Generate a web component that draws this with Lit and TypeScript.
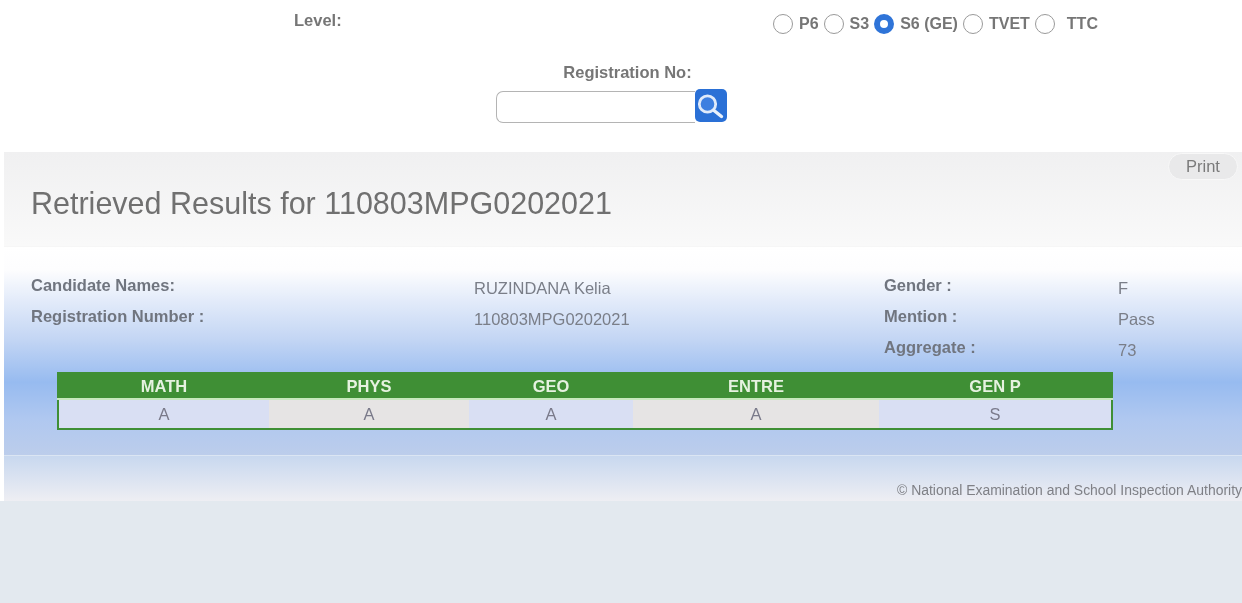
import { LitElement, html, css, svg } from "lit";
import { customElement } from "lit/decorators.js";

const levels = [
  { label: "P6", on: false },
  { label: "S3", on: false },
  { label: "S6 (GE)", on: true },
  { label: "TVET", on: false },
  { label: "TTC", on: false },
];
const grades = [
  { s: "MATH", g: "A", alt: false },
  { s: "PHYS", g: "A", alt: true },
  { s: "GEO", g: "A", alt: false },
  { s: "ENTRE", g: "A", alt: true },
  { s: "GEN P", g: "S", alt: false },
];

@customElement("app-root")
export class AppRoot extends LitElement {
  static styles = css`
    :host { display: block; width: 1242px; height: 603px; overflow: hidden; background: #e3e9ef; font-family: "Liberation Sans", Arial, sans-serif; color: #6f6f6f; filter: blur(0.45px); }
    .top { background: #fff; height: 152px; box-sizing: border-box; padding-top: 14px; }
    .level-row { display: grid; grid-template-columns: 773px 1fr; height: 20px; align-items: center; font-weight: 700; color: #767676; }
    .level-label { padding-left: 294px; font-size: 16.5px; line-height: 12px; padding-bottom: 8px; }
    .radios { display: flex; align-items: center; font-size: 16px; }
    .radio { width: 20px; height: 20px; box-sizing: border-box; border: 1.6px solid #9a9a9a; border-radius: 50%; background: #fff; flex: none; }
    .radio.on { border: 6.5px solid #2f74d8; }
    .opt { display: flex; align-items: center; gap: 6px; margin-right: 5px; }
    .opt span { white-space: nowrap; }
    .ttc { padding-left: 6px; }
    .reg { display: flex; flex-direction: column; align-items: center; margin-top: 29px; }
    .reg-label { font-size: 16.5px; font-weight: 700; color: #767676; margin-left: 13px; line-height: 18px; }
    .search { display: flex; margin-top: 8px; margin-right: 20px; align-items: flex-start; }
    .input { width: 199px; height: 32px; box-sizing: border-box; margin-top: 2px; border: 1.6px solid #b4b4b4; border-right: none; border-radius: 7px 0 0 7px; background: #fff; }
    .go { width: 32px; height: 33px; border-radius: 5px; background: #2a70d6; display: block; }
    .panel-wrap { display: flex; height: 349px; background: #fff; }
    .panel { margin-left: 4px; flex: 1; display: flex; flex-direction: column; position: relative; }
    .head { height: 95px; box-sizing: border-box; background: linear-gradient(#f0f0f1, #f9f9f9); padding-left: 27px; border-bottom: 1px solid #f6f6f6; }
    h1 { margin: 0; padding-top: 32px; font-size: 30.5px; font-weight: 400; line-height: 38px; color: #707070; white-space: nowrap; }
    .print { position: absolute; right: 4px; top: 1px; width: 70px; height: 27px; box-sizing: border-box; border-radius: 14px; background: #e9e9ea; border: 1px solid #f8f8f8; font-size: 16.5px; color: #7a7a7a; display: flex; align-items: center; justify-content: center; }
    .body { height: 209px; box-sizing: border-box; background: linear-gradient(#ffffff 0, #fdfdfe 11%, #e4ecfa 25%, #c4d6f4 44%, #97bbf0 65%, #b0c8f0 83%, #bccdeb 100%); padding-top: 32px; border-bottom: 1px solid #dbe5f3; }
    .info { display: grid; grid-template-columns: 443px 410px 234px 1fr; padding-left: 27px; grid-auto-rows: 31px; height: 93px; font-size: 16.5px; }
    .info b { color: #70757f; position: relative; top: -3px; }
    .info span { color: #7a7e88; }
    table { margin-left: 53px; width: 1054px; border-collapse: collapse; table-layout: fixed; border: 2.5px solid #3f8f35; font-size: 16.5px; }
    th { background: #3f8f35; color: #e6f2e0; font-weight: 700; height: 24px; padding: 0; }
    td { background: #d9dff3; color: #7a7a8a; height: 28px; padding: 0; text-align: center; border-top: 2px solid #c7e8bd; }
    td.alt { background: #e6e4e4; }
    .foot { height: 45px; box-sizing: border-box; background: linear-gradient(#c8d8ef, #eeeef3); display: flex; justify-content: flex-end; padding-top: 26px; }
    .foot span { font-size: 13.95px; line-height: 16px; white-space: nowrap; color: #7f8086; width: 345px; flex: none; }
  `;

  private icon() {
    return svg`<circle cx="12.5" cy="15" r="8.2" fill="#3d7fe0" stroke="#dfeafa" stroke-width="2.8"/><path d="M19 21.5l7.5 6" stroke="#e8f0fb" stroke-width="3.4" stroke-linecap="round"/>`;
  }

  render() {
    return html`
      <div class="top">
        <div class="level-row">
          <div class="level-label">Level:</div>
          <div class="radios">
            ${levels.map(
              (l) => html`<label class="opt"><i class="radio ${l.on ? "on" : ""}"></i><span class=${l.label === "TTC" ? "ttc" : ""}>${l.label}</span></label>`
            )}
          </div>
        </div>
        <div class="reg">
          <div class="reg-label">Registration No:</div>
          <div class="search">
            <div class="input"></div>
            <svg class="go" viewBox="0 0 32 33">${this.icon()}</svg>
          </div>
        </div>
      </div>
      <div class="panel-wrap">
        <div class="panel">
          <div class="head"><h1>Retrieved Results for 110803MPG0202021</h1></div>
          <div class="print">Print</div>
          <div class="body">
            <div class="info">
              <b>Candidate Names:</b><span>RUZINDANA Kelia</span><b>Gender :</b><span>F</span>
              <b>Registration Number :</b><span>110803MPG0202021</span><b>Mention :</b><span>Pass</span>
              <i></i><i></i><b>Aggregate :</b><span>73</span>
            </div>
            <table>
              <colgroup><col style="width:211px" /><col style="width:200px" /><col style="width:164px" /><col style="width:246px" /><col style="width:233px" /></colgroup>
              <tr>${grades.map((g) => html`<th>${g.s}</th>`)}</tr>
              <tr>${grades.map((g) => html`<td class=${g.alt ? "alt" : ""}>${g.g}</td>`)}</tr>
            </table>
          </div>
          <div class="foot"><span>© National Examination and School Inspection Authority</span></div>
        </div>
      </div>
    `;
  }
}
